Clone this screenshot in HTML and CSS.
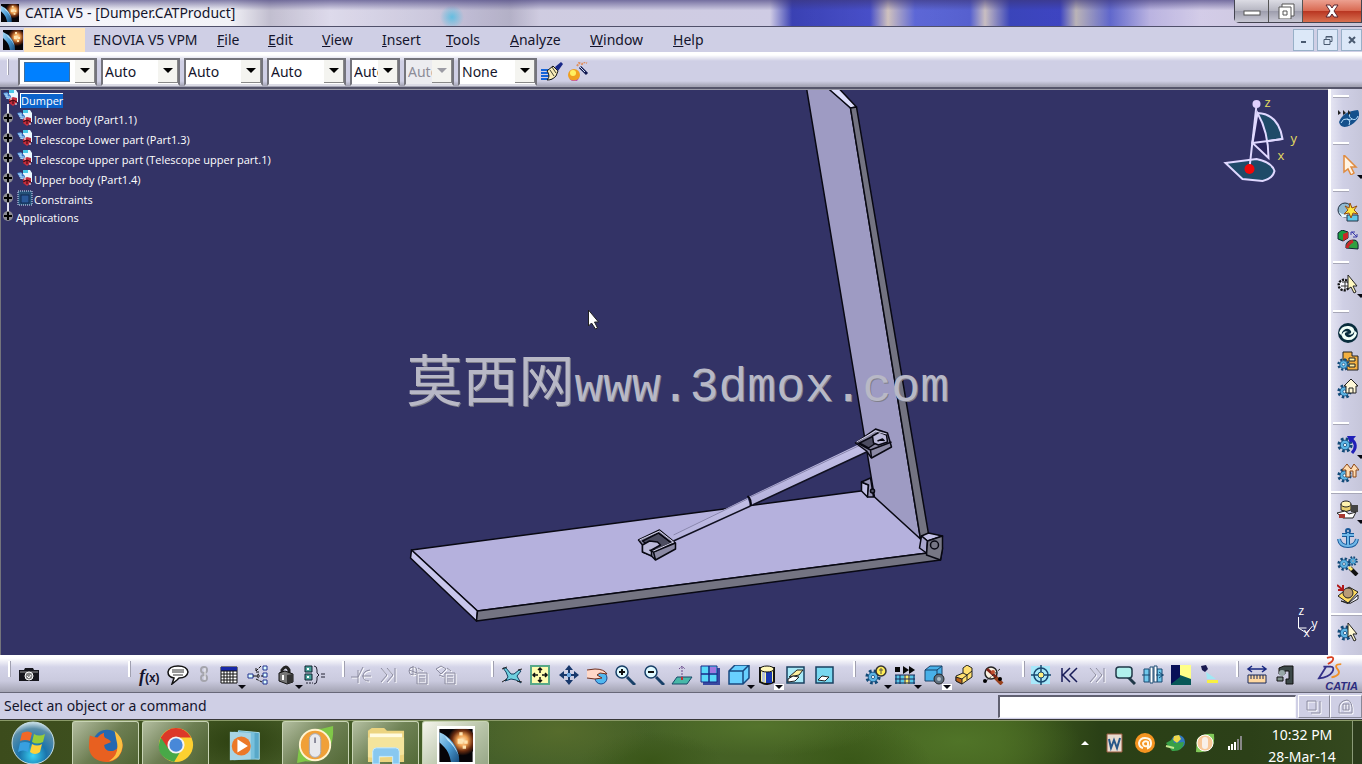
FILE: index.html
```html
<!DOCTYPE html>
<html lang="en">
<head>
<meta charset="utf-8">
<title>CATIA V5 - [Dumper.CATProduct]</title>
<link rel="stylesheet" href="styles.css">
</head>
<body>
<svg class="defs" aria-hidden="true">
  <defs>
    <radialGradient id="flare" cx="55%" cy="45%" r="50%"><stop offset="0" stop-color="#fff0c8"/><stop offset=".35" stop-color="#f0a050"/><stop offset=".7" stop-color="#6a2c10"/><stop offset="1" stop-color="#060408"/></radialGradient>
    <linearGradient id="comet" x1="0" y1="0" x2="1" y2="1"><stop offset="0" stop-color="#a8d8f4"/><stop offset=".5" stop-color="#4c9cd4"/><stop offset="1" stop-color="#184c7c"/></linearGradient>
    <radialGradient id="orb" cx="50%" cy="80%" r="80%"><stop offset="0" stop-color="#3ad4f4"/><stop offset=".4" stop-color="#1a74ac"/><stop offset=".8" stop-color="#5a8ea8"/><stop offset="1" stop-color="#cfe4ec"/></radialGradient>
    <linearGradient id="rod" x1="0" y1="0" x2="1" y2="2"><stop offset="0" stop-color="#cfccf2"/><stop offset="1" stop-color="#8f8cbb"/></linearGradient>
    <symbol id="catia" viewBox="0 0 20 20"><rect width="20" height="20" fill="#060408"/><circle cx="13" cy="8" r="9" fill="url(#flare)"/><path d="M0 2Q5 4 8 8q4 5 4 12H7Q6 14 3 11L0 8Z" fill="url(#comet)"/><path d="M3 4q6 4 9 13-3-7-7-10z" fill="#c8e8f8"/><path d="M12 2h2v2h-2zM14 10h2v2h-2zM11 6h3v3h-3zM15 7h2v2h-2z" fill="#ffe4b0"/></symbol>
    <symbol id="gear" viewBox="0 0 20 20"><circle cx="10" cy="10" r="7" fill="none" stroke="#124a78" stroke-width="5" stroke-dasharray="3 2.5"/><circle cx="10" cy="10" r="6" fill="#5cb4e4" stroke="#124a78"/><circle cx="10" cy="10" r="2" fill="#fff" stroke="#124a78"/></symbol>
    <symbol id="part" viewBox="0 0 16 16"><path d="M6 0h7l2 3v9H6z" fill="#e8f8ff"/><path d="M6 0h5v3H6z" fill="#48c8e8"/><path d="M0 3l4-1 4 4-1 4-4-2z" fill="#3c78c8"/><path d="M1 4h2v3M4 3v4h3M3 8l4 1" stroke="#b8e4ff" fill="none"/><path d="M6 9l4-2 4 1v5l-4 3-4-3z" fill="#c42c3c"/><path d="M6 12l4-2 4 2M10 10v4" stroke="#300810" fill="none"/><path d="M7 9h2M12 14h2" stroke="#fff"/></symbol>
    <symbol id="knot" viewBox="0 0 10 10"><circle cx="5" cy="5" r="5" fill="#8c8c94"/><path d="M5 1v8M1 5h8" stroke="#000" stroke-width="2"/></symbol>
  </defs>
</svg>

<header class="titlebar">
  <svg class="app-icon" viewBox="0 0 20 20"><use href="#catia"/></svg>
  <h1 class="title">CATIA V5 - [Dumper.CATProduct]</h1>
  <div class="window-buttons">
    <button class="wb" aria-label="Minimize"><svg viewBox="0 0 20 16"><rect x="2" y="8" width="16" height="4" fill="#fff" stroke="#555"/></svg></button>
    <button class="wb" aria-label="Restore"><svg viewBox="0 0 20 16"><path d="M6 1h12v12h-3v3H3V4h3z" fill="#fff" stroke="#555"/><path d="M6 4h9v9M7 8h4v4H7z" fill="none" stroke="#555"/></svg></button>
    <button class="wb wb-close" aria-label="Close"><svg viewBox="0 0 20 16"><path d="M4 2h4l2 3 2-3h4l-4 6 4 6h-4l-2-3-2 3H4l4-6z" fill="#fff" stroke="#5a2630"/></svg></button>
  </div>
</header>

<nav class="menubar">
  <svg class="menu-icon" viewBox="0 0 20 20"><use href="#catia"/></svg>
  <button class="menu menu-start"><u>S</u>tart</button>
  <button class="menu menu-enovia">ENOVIA V5 VPM</button>
  <button class="menu menu-file"><u>F</u>ile</button>
  <button class="menu menu-edit"><u>E</u>dit</button>
  <button class="menu menu-view"><u>V</u>iew</button>
  <button class="menu menu-insert"><u>I</u>nsert</button>
  <button class="menu menu-tools"><u>T</u>ools</button>
  <button class="menu menu-analyze"><u>A</u>nalyze</button>
  <button class="menu menu-window"><u>W</u>indow</button>
  <button class="menu"><u>H</u>elp</button>
  <div class="mdi">
    <button aria-label="Minimize document"><svg viewBox="0 0 12 12"><path d="M3 8h5" stroke="#4a5a70" stroke-width="2"/></svg></button>
    <button aria-label="Restore document"><svg viewBox="0 0 12 12"><path d="M2 5.500h6v5H2zM4 5V2.500h6v5H8M4 3h6" fill="none" stroke="#4a5a70"/></svg></button>
    <button aria-label="Close document"><svg viewBox="0 0 12 12"><path d="M3 3l6 6M9 3L3 9" stroke="#4a5a70" stroke-width="2"/></svg></button>
  </div>
</nav>

<section class="properties" aria-label="Graphic properties">
  <i class="grip"></i>
  <span class="combo combo-color"><select aria-label="Fill color"><option label=" "></option></select><i class="swatch"></i><i class="arrow"></i></span>
  <span class="combo"><select aria-label="Transparency"><option>Auto</option></select><i class="arrow"></i></span>
  <span class="combo"><select aria-label="Line thickness"><option>Auto</option></select><i class="arrow"></i></span>
  <span class="combo"><select aria-label="Line type"><option>Auto</option></select><i class="arrow"></i></span>
  <span class="combo combo-small"><select aria-label="Point symbol"><option>Auto</option></select><i class="arrow"></i></span>
  <span class="combo combo-small combo-off"><select aria-label="Rendering style" disabled><option>Auto</option></select><i class="arrow"></i></span>
  <span class="combo"><select aria-label="Layer"><option>None</option></select><i class="arrow"></i></span>
  <button class="tool" aria-label="Painter"><svg viewBox="0 0 22 20"><path d="M0 8h8M0 11h9M0 14h9M0 17h11" stroke="#1464d8" stroke-width="2"/><path d="M6 9l6-5 5 5-2 5c-3 3-5 4-9 4 2-2 3-5 0-9z" fill="#f8ecb8" stroke="#111"/><path d="M9 8l4 6M11 5l4 6" stroke="#443"/><path d="M14 5l6-5 2 2-5 7z" fill="#182888"/></svg></button>
  <button class="tool" aria-label="Wizard"><svg viewBox="0 0 22 20"><circle cx="7" cy="13" r="6" fill="#f0a020"/><circle cx="6" cy="11" r="3" fill="#fff060"/><path d="M2 16q5 5 10 0l-2 3H5z" fill="#c050b0"/><path d="M13 5l7 7" stroke="#101850" stroke-width="3"/><path d="M13 5l5 5" stroke="#d0e0f0"/><path d="M10 4l2-3 3 1 2-2 3 1" stroke="#e09060" stroke-width="2" fill="none" stroke-dasharray="2 1"/></svg></button>
</section>

<main class="workspace">
  <section class="viewport" aria-label="3D view">
    <svg class="scene" viewBox="0 90 1328 565" preserveAspectRatio="xMidYMid slice">
      <g stroke="#080812" stroke-width="1.500" stroke-linejoin="round">
        <path d="M411 550L868 490L921 539L927 553L477 611Z" fill="#b5b1dd"/>
        <path d="M411 550L410 558L476 621L477 611Z" fill="#c8c6ec"/>
        <path d="M477 611L927 553L942 548L940 560L476 621Z" fill="#747482"/>
        <path d="M806 88L829 88L850 108L920 539L874 497Z" fill="#9e9bc3"/>
        <path d="M826 87L850 108L856 107L837 87Z" fill="#dcdcfa"/>
        <path d="M850 108L856 107L928 534L920 539Z" fill="#737381"/>
        <path d="M921 536L928 533L942 536L927 541Z" fill="#c3c1e6"/>
        <path d="M921 536L927 541L926 553L919 548Z" fill="#aaa8ce"/>
        <path d="M927 541L942 536V549L940 560L926 555Z" fill="#777785"/><circle cx="934" cy="545" r="4" fill="#777785"/>
        <path d="M861 482L868 485L867 497L861 491Z" fill="#c3c1e6"/>
        <path d="M861 482L870 478L873 497L867 497L868 485Z" fill="#9996b8"/><circle cx="872" cy="491" r="2" fill="#55556a"/>
      </g>
      <path d="M672 535L747 498L750 506L673 541Z" fill="url(#rod)"/>
      <path d="M748 497L859 444L866 452L752 505Z" fill="url(#rod)"/>
      <path d="M673 535L747 499M750 497L860 445" stroke="#8885ac"/>
      <path d="M673 541L750 506M752 505L866 452" stroke="#101020" stroke-width="1.500"/>
      <path d="M747 496q4 3 3 10" fill="none" stroke="#080812" stroke-width="2"/>
      <g stroke="#080812" stroke-width="1.500" stroke-linejoin="round">
        <path d="M638 540L659 530L675 543V549L655 560L650 555L642 552V545Z" fill="#8b89a4"/>
        <path d="M642 541L658 533L671 543L655 551Z" fill="#4c4c60"/>
        <path d="M642 545l7-4 8 1 3 3-9 5v6l-9-4z" fill="#bcbada"/><path d="M653 552L675 543M655 560L653 552M649 550L653 552L671 543L658 533" fill="none"/>
        <path d="M639 540L659 531L673 542L653 551" fill="none" stroke="#d8d6ee" stroke-width="1"/>
        <path d="M855 443L875 429L887 433L891 447L871 458L866 451Z" fill="#8b89a4"/>
        <path d="M859 443L875 435L883 438L868 448Z" fill="#4c4c60"/>
        <path d="M872 436l7-4 7 3 1 7-9 3-5-2z" fill="#bcbada"/><path d="M870 450L891 442M871 458L870 450L857 443" fill="none"/><path d="M877 441l5-2 2 2"/>
        <path d="M856 442L875 431L886 434" fill="none" stroke="#d8d6ee" stroke-width="1"/>
      </g>
      <g fill="#1f4a68" stroke="#e0d8ff" stroke-width="2">
        <path d="M1225 163L1256 159Q1271 162 1274 171Q1272 179 1262 181L1242 179Z"/>
        <path d="M1257 113Q1278 114 1282 139L1252 143Z"/><path d="M1257 113Q1268 132 1268 158L1252 143Z" fill="#29245c"/>
        <path d="M1252 143L1282 139M1256 105L1249 168" fill="none"/>
      </g>
      <circle cx="1256" cy="104" r="4" fill="#e0d0ff"/><circle cx="1249" cy="169" r="5" fill="#f00808"/>
      <g class="axis-labels"><text x="1264" y="107">z</text><text x="1290" y="143">y</text><text x="1277" y="160">x</text></g>
      <path d="M1298 617v11l8 5 6-7M1298 628h8" fill="none" stroke="#fff"/>
      <g class="axis-small"><text x="1298" y="615">z</text><text x="1311" y="628">y</text><text x="1303" y="637">x</text></g>
      <text class="mark" x="406" y="401">莫西网<tspan class="mark-latin">www.3dmox.com</tspan></text>
      <path d="M588 310v16l3-3 4 6 2-1-3-6h4z" fill="#fff" stroke="#222"/>
    </svg>
    <ul class="tree">
      <li class="root"><svg class="part"><use href="#part"/></svg><span class="selected">Dumper</span></li>
      <li><svg class="knot"><use href="#knot"/></svg><svg class="part"><use href="#part"/></svg>lower body (Part1.1)</li>
      <li><svg class="knot"><use href="#knot"/></svg><svg class="part"><use href="#part"/></svg>Telescope Lower part (Part1.3)</li>
      <li><svg class="knot"><use href="#knot"/></svg><svg class="part"><use href="#part"/></svg>Telescope upper part (Telescope upper part.1)</li>
      <li><svg class="knot"><use href="#knot"/></svg><svg class="part"><use href="#part"/></svg>Upper body (Part1.4)</li>
      <li><svg class="knot"><use href="#knot"/></svg><svg class="part" viewBox="0 0 16 16"><rect x="1" y="1" width="14" height="14" fill="#245078" stroke="#d8e8ff" stroke-dasharray="1 1"/><rect x="4" y="5" width="8" height="8" fill="#2a5898" stroke="#102850"/></svg>Constraints</li>
      <li><svg class="knot"><use href="#knot"/></svg>Applications</li>
    </ul>
  </section>
  <aside class="sidebar" aria-label="Assembly tools">
    <div class="side-group"><button class="tool" aria-label="DMU"><svg viewBox="0 0 22 20"><path d="M2 14Q6 3 21 2Q25 10 14 17Q4 22 2 14Z" fill="#14508c"/><path d="M4 15q2-5 6-4t2 6M13 4q-2 5 2 7t6-3M10 11q4 2 5 0" fill="none" stroke="#b8e0ff"/><path d="M1 2v5l3-2zM6 2v5l3-2zM11 2v5l3-2z" fill="#222"/></svg></button></div>
    <div class="side-group"><button class="tool" aria-label="Select"><svg viewBox="0 0 22 20"><path d="M7 0v17l4-3 3 6 3-2-3-6h5z" fill="#fff4e4" stroke="#e08c40" stroke-width="1.500"/></svg><i class="drop"></i></button></div>
    <div class="side-group"><button class="tool" aria-label="New component"><svg viewBox="0 0 22 20"><circle cx="8" cy="8" r="7" fill="#90b8d0" stroke="#234"/><path d="M2 10q6 5 12 0l-3 5H5z" fill="#e8f8ff"/><path d="M10 13h11v6H10z" fill="#60c8e8" stroke="#234"/><path d="M13 1l2 5 5-2-3 4 4 4-5-1-2 5-2-5-5 1 4-4-3-4 4 2z" fill="#ffe840" stroke="#964c10"/></svg></button>
      <button class="tool" aria-label="Replace component"><svg viewBox="0 0 22 20"><path d="M1 3l4-3 6 2v6l-5 3-5-2z" fill="#18a040" stroke="#123"/><path d="M6 4l5-2v6l-5 3z" fill="#c82828"/><path d="M14 2h4M14 2v3M20 7h-4M20 7V4M15 2l5 5" stroke="#3838a8" fill="none"/><path d="M9 18Q8 10 17 10q5 0 4 9z" fill="#30a040" stroke="#123"/><path d="M16 11q-5 2-6 7" stroke="#c82828" stroke-width="3"/></svg></button></div>
    <div class="side-group"><button class="tool" aria-label="Product selection"><svg viewBox="0 0 22 20"><circle cx="7" cy="11" r="5" fill="#f8f8ff" stroke="#111" stroke-width="3" stroke-dasharray="2 1"/><circle cx="7" cy="11" r="4" fill="#f8f8ff"/><path d="M5 8h6M4 12h7M8 7v9" stroke="#333"/><path d="M11 1v14l3-2 3 6 2-1-3-6h4z" fill="#fff8c0" stroke="#222"/></svg><i class="drop"></i></button></div>
    <div class="side-group"><button class="tool" aria-label="Workbench"><svg viewBox="0 0 22 20"><circle cx="11" cy="10" r="10" fill="#082c3c"/><path d="M2 10Q4 2 12 3q6 1 5 6-2 4-6 2 4 0 3-3-3-4-7-1-3 2-2 6zM20 10q-2 8-10 7-6-1-5-6 2-4 6-2-4 0-3 3 3 4 7 1 3-2 2-6z" fill="#f0fff8"/></svg></button>
      <button class="tool" aria-label="Graph tree"><svg viewBox="0 0 22 20"><path d="M6 1h9v4h6v14H10V9H6z" fill="#f4b040" stroke="#222"/><path d="M12 7h6v3h-6zM12 13h6v3h-6z" fill="#fff0a0" stroke="#222"/><svg x="0" y="7" width="13" height="13"><use href="#gear"/></svg></svg></button>
      <button class="tool" aria-label="Home product"><svg viewBox="0 0 22 20"><svg x="0" y="5" width="15" height="15"><use href="#gear"/></svg><path d="M7 7l7-7 7 7h-2v7H9V7z" fill="#fff8d8" stroke="#222"/><path d="M12 14V9h4v5" fill="none" stroke="#222"/></svg></button></div>
    <div class="side-group"><button class="tool" aria-label="Manipulation"><svg viewBox="0 0 22 20"><svg x="0" y="2" width="16" height="16"><use href="#gear"/></svg><path d="M14 4q8 6 1 14" fill="none" stroke="#2020b8" stroke-width="3"/><path d="M10 1h9l-6 7z" fill="#2020b8"/></svg><i class="drop"></i></button>
      <button class="tool" aria-label="Snap"><svg viewBox="0 0 22 20"><svg x="0" y="5" width="15" height="15"><use href="#gear"/></svg><path d="M9 14V7H5l5-6 4 5 3-5 5 6h-3v7h-3V8h-3v6z" fill="#ffdcb0" stroke="#8c4818"/></svg></button></div>
    <div class="side-group side-plain"><button class="tool" aria-label="Coincidence"><svg viewBox="0 0 22 20"><path d="M4 4v6q5 3 10 0V4" fill="#e8d070" stroke="#222"/><ellipse cx="9" cy="4" rx="5" ry="3" fill="#fff4b0" stroke="#222"/><path d="M14 5h7v7h-7z" fill="#444"/><path d="M0 13l8-2 4 3 7-2-3 6H6z" fill="#fff" stroke="#222"/><path d="M2 14h6v4H2z" fill="#a83830"/></svg><i class="drop"></i></button>
      <button class="tool" aria-label="Fix component"><svg viewBox="0 0 22 20"><g fill="none" stroke="#185898" stroke-width="4"><circle cx="11" cy="3" r="1"/><path d="M11 5v13M5 7h12M2 11q1 7 9 7t9-7"/></g><path d="M11 5v13M5 7h12M2 11q1 7 9 7t9-7" fill="none" stroke="#70b8e8" stroke-width="2"/></svg></button>
      <button class="tool" aria-label="Quick constraint"><svg viewBox="0 0 22 20"><svg x="0" y="1" width="14" height="14"><use href="#gear"/></svg><svg x="11" y="0" width="10" height="10"><use href="#gear"/></svg><path d="M13 12l7 7" stroke="#111" stroke-width="4"/><path d="M12 11l3 3" stroke="#ffe870" stroke-width="3"/></svg></button>
      <button class="tool" aria-label="Flexible assembly"><svg viewBox="0 0 22 20"><path d="M1 12L12 3l9 5-10 11z" fill="#ffdc60" stroke="#222"/><path d="M4 17l8 2 9-8v4l-9 5z" fill="#f8f8ff" stroke="#222"/><circle cx="11" cy="9" r="5" fill="#b89c78" stroke="#222"/><path d="M0 1l6 5M6 1v5H1" stroke="#b01818" stroke-width="2" fill="none"/></svg></button></div>
    <div class="side-group side-plain side-last"><button class="tool" aria-label="Select constraint"><svg viewBox="0 0 22 20"><svg x="0" y="3" width="16" height="16"><use href="#gear"/></svg><path d="M11 1v14l3-2 3 6 2-1-3-6h4z" fill="#fff8d0" stroke="#222"/></svg></button></div>
  </aside>
</main>

<section class="toolbar" aria-label="Tools">
  <div class="group g1"><button class="tool" aria-label="Capture"><svg viewBox="0 0 22 20"><path d="M1 5h5l1-2h8l1 2h5v11H1z" fill="#16161c"/><path d="M2 7h18" stroke="#999"/><circle cx="11" cy="11" r="4" fill="#888" stroke="#fff"/><path d="M9 11l2 2 2-3" stroke="#fff" fill="none"/></svg></button></div>
  <div class="group g2">
    <button class="tool tool-fx" aria-label="Formula"><i>f</i>(x)</button>
    <button class="tool" aria-label="Comment"><svg viewBox="0 0 22 20"><path d="M11 1q9 0 10 6-1 6-9 6l-2 2-5 4 2-6Q1 12 1 7q1-6 10-6z" fill="#fff" stroke="#111" stroke-width="1.500"/><path d="M5 5h12M5 7h12M6 10h10" stroke="#333"/></svg></button>
    <button class="tool tool-narrow" aria-label="Link"><svg viewBox="0 0 22 20"><g fill="none" stroke="#a4a4ac" stroke-width="2"><circle cx="11" cy="5" r="3"/><circle cx="11" cy="13" r="3"/></g><path d="M12 3v12" stroke="#eee"/></svg></button>
    <button class="tool" aria-label="Design table"><svg viewBox="0 0 22 20"><path d="M3 2h16v16H3z" fill="#fff" stroke="#111"/><path d="M3 2h16v4H3z" fill="#1828a8"/><path d="M3 6h16M3 9h16M3 12h16M3 15h16M6 6v12M9 6v12M12 6v12M15 6v12" stroke="#111"/></svg><i class="drop"></i></button>
    <button class="tool" aria-label="Relations"><svg viewBox="0 0 22 20"><path d="M1 9h5v4H1zM16 1h4v4h-4zM16 8h4v4h-4zM16 15h4v4h-4z" fill="#dff" stroke="#203090"/><path d="M6 11h10M9 6l5-5M9 14l6 3M9 3v4h3M12 9l-3 2 3 2" fill="none" stroke="#111" stroke-dasharray="3 1"/></svg></button>
    <button class="tool" aria-label="Lock"><svg viewBox="0 0 22 20"><path d="M7 9V5q4-6 7 0v4" fill="none" stroke="#222" stroke-width="3"/><path d="M4 8l6-2 8 3v8l-6 2-8-3z" fill="#777" stroke="#111"/><path d="M12 10l6-1v8l-6 2z" fill="#333"/><path d="M8 10v5" stroke="#fff" stroke-width="2"/></svg><i class="drop"></i></button>
    <button class="tool" aria-label="Equivalent dimensions"><svg viewBox="0 0 22 20"><path d="M1 1h7v6H1zM1 9h7v6H1z" fill="#48a098" stroke="#123"/><path d="M3 3h2v2H3zM3 11h2v2H3z" fill="#fff"/><path d="M2 18h7" stroke="#223" stroke-dasharray="2 1"/><path d="M10 1q3 0 3 4v3l2 2-2 2v3q0 4-3 4M17 9h4M17 12h4" fill="none" stroke="#223"/></svg></button>
  </div>
  <div class="group g3">
    <button class="tool" aria-label="Break link"><svg class="off" viewBox="0 0 22 20"><path d="M1 12h7L13 2M8 5v13M12 11h9M20 5q-7 1-7 6 0 5 6 5"/></svg></button>
    <button class="tool" aria-label="Step forward"><svg class="off" viewBox="0 0 22 20"><path d="M3 3l6 7-6 7M9 3l6 7-6 7M17 3v14"/></svg></button>
    <button class="tool" aria-label="Paste component"><svg class="off" viewBox="0 0 22 20"><circle cx="6" cy="6" r="4"/><path d="M2 5l8 3M6 1v9M11 3l5 3M10 8h10v11H10zM12 11h6M12 14h6M12 16h6"/></svg></button>
    <button class="tool" aria-label="Update component"><svg class="off" viewBox="0 0 22 20"><path d="M1 4l5 5 5-5-5-3zM4 10l5 2M10 8h10v11H10zM12 11h6M12 14h6M12 16h6M12 3l4 3"/></svg></button>
  </div>
  <div class="group g4">
    <button class="tool" aria-label="Fly mode"><svg viewBox="0 0 22 20"><path d="M2 3l3 0 5 6 3 0 5-4 2 1-4 5 1 2 3 5-5-3-5-1-6 2 3-4-2-5z" fill="#70d0e0" stroke="#124060"/><path d="M1 4l5-2M17 5l4-1M1 17l5-3M16 16l5 1" stroke="#222"/></svg></button>
    <button class="tool" aria-label="Fit all in"><svg viewBox="0 0 22 20"><path d="M2 1h18v18H2z" fill="#fffcb0" stroke="#58a888" stroke-width="2"/><path d="M11 3v5M11 12v5M4 10h5M13 10h5M9 5l2-2 2 2M9 15l2 2 2-2M6 8l-2 2 2 2M16 8l2 2-2 2" fill="none" stroke="#111" stroke-width="1.500"/></svg></button>
    <button class="tool" aria-label="Pan"><svg viewBox="0 0 22 20"><path d="M11 2v16M3 10h16" stroke="#18386c" stroke-width="2"/><path d="M11 0l4 5H7zM11 20l4-5H7zM1 10l5-4v8zM21 10l-5-4v8z" fill="#18386c"/><path d="M9 8h4v4H9z" fill="#70a8e0"/></svg></button>
    <button class="tool" aria-label="Rotate"><svg viewBox="0 0 22 20"><circle cx="15" cy="13" r="6" fill="#50b8f0" stroke="#184890"/><path d="M1 5l8-1q9 0 12 5l-7-1-3 2 5 3-7 1-8-1" fill="#ffd8c8" stroke="#703020"/></svg></button>
    <button class="tool" aria-label="Zoom in"><svg viewBox="0 0 22 20"><path d="M13 12l8 8" stroke="#184068" stroke-width="3"/><circle cx="8" cy="7" r="6" fill="#e0faff" stroke="#184068" stroke-width="1.500"/><path d="M5 7h6M8 4v6" stroke="#111" stroke-width="2"/></svg></button>
    <button class="tool" aria-label="Zoom out"><svg viewBox="0 0 22 20"><path d="M13 12l8 8" stroke="#184068" stroke-width="3"/><circle cx="8" cy="7" r="6" fill="#e0faff" stroke="#184068" stroke-width="1.500"/><path d="M5 7h6" stroke="#111" stroke-width="2"/></svg></button>
    <button class="tool" aria-label="Normal view"><svg viewBox="0 0 22 20"><path d="M6 12h15l-5 7H1z" fill="#48b8a8" stroke="#184868"/><path d="M11 13V1M8 4l3-3 3 3" fill="none" stroke="#684888" stroke-dasharray="2 1"/><path d="M11 12v3" stroke="#c03030" stroke-width="2"/></svg></button>
    <button class="tool" aria-label="Multi view"><svg viewBox="0 0 22 20"><path d="M4 3h17v17H4z" fill="#3848a0"/><path d="M2 1h16v16H2z" fill="#58d8f8" stroke="#182888"/><path d="M11 2h6v6h-6z" fill="#a078e0"/><path d="M10 1v16M2 9h16" stroke="#182888" stroke-width="1.500"/></svg></button>
    <button class="tool" aria-label="Isometric view"><svg viewBox="0 0 22 20"><path d="M1 6l6-6h14v13l-6 6H1zM1 6h14v13M15 6l6-6" fill="#68d0ff" stroke="#184880" stroke-width="1.500"/></svg><i class="drop"></i></button>
    <button class="tool" aria-label="Shading"><svg viewBox="0 0 22 20"><path d="M4 3h14v14q-7 4-14 0z" fill="#f8f4a0" stroke="#111" stroke-width="2"/><path d="M10 7h6v11h-6z" fill="#1838b0"/><path d="M6 7h3v10H6z" fill="#b8c4e0"/><ellipse cx="11" cy="4" rx="7" ry="3" fill="#fff8b8" stroke="#111"/></svg><i class="drop drop-lit"></i></button>
    <button class="tool" aria-label="Hide/Show"><svg viewBox="0 0 22 20"><path d="M3 2h17v16H3z" fill="#a8eaf8" stroke="#184060" stroke-width="1.500"/><path d="M5 12l8-7h6l-4 5z" fill="#fff0a0" stroke="#222"/><path d="M4 14l5-3 6 1-4 4-7 1z" fill="#fff" stroke="#222"/></svg></button>
    <button class="tool" aria-label="Swap visible space"><svg viewBox="0 0 22 20"><path d="M3 2h17v16H3z" fill="#78d8f0" stroke="#184060" stroke-width="1.500"/><path d="M5 15l4-4 7 1-4 4z" fill="#fff" stroke="#222"/></svg></button>
  </div>
  <div class="group g5">
    <button class="tool" aria-label="Update all"><svg viewBox="0 0 22 20"><svg x="0" y="4" width="16" height="16"><use href="#gear"/></svg><circle cx="16" cy="6" r="5" fill="#ffec58" stroke="#333" stroke-width="1.500"/><path d="M14 5h4M16 3v6" stroke="#554"/></svg><i class="drop"></i></button>
    <button class="tool" aria-label="Simulation"><svg viewBox="0 0 22 20"><path d="M1 2h5v5H1zM9 1l6 4-6 4zM15 1l6 4-6 4z" fill="#080808"/><path d="M1 10h20v9H1z" fill="#58c8e8"/><path d="M10 10h6v9h-6z" fill="#fff070"/><path d="M1 10h20M1 14h20M1 18h20M2 10v9M6 10v9M11 10v9M15 10v9M20 10v9" stroke="#182858"/></svg><i class="drop"></i></button>
    <button class="tool" aria-label="Catalog part"><svg viewBox="0 0 22 20"><path d="M1 5l5-4h12v9l-5 6H1z" fill="#48b0e8" stroke="#184068"/><path d="M1 5h12v11M13 5l5-4" fill="none" stroke="#184068"/><circle cx="15" cy="14" r="5" fill="#607080" stroke="#222"/><circle cx="15" cy="14" r="2" fill="#b0c0c8"/></svg><i class="drop drop-lit"></i></button>
    <button class="tool" aria-label="Weld"><svg viewBox="0 0 22 20"><path d="M3 11l7-3V3l4-3 5 3v9L9 19l-6-3z" fill="#ffe070" stroke="#222"/><path d="M10 8l4 2 5-4M14 10v5M9 14l5-4" stroke="#222" fill="none"/><path d="M3 12l6 2v5l-6-3z" fill="#b86018" stroke="#222"/></svg></button>
    <button class="tool" aria-label="Clash analysis"><svg viewBox="0 0 22 20"><path d="M13 12l7 7" stroke="#98401c" stroke-width="4"/><circle cx="9" cy="8" r="6" fill="#f8f0e0" stroke="#222" stroke-width="1.500"/><path d="M5 4l9 8" stroke="#852418" stroke-width="3"/><path d="M18 4L3 17" stroke="#333" stroke-dasharray="3 1"/><circle cx="3" cy="16" r="2"/><circle cx="18" cy="14" r="2"/><circle cx="11" cy="7" r="2" fill="#c05030"/></svg></button>
  </div>
  <div class="group g6">
    <button class="tool" aria-label="Center graph"><svg viewBox="0 0 22 20"><rect x="1" y="1" width="19" height="18" fill="#a8e8fa"/><circle cx="11" cy="10" r="7" fill="none" stroke="#184870" stroke-width="1.500"/><circle cx="11" cy="10" r="3" fill="#fff080" stroke="#184870"/><path d="M11 0v7M11 13v7M1 10h7M14 10h7" stroke="#184870" stroke-width="1.500"/></svg></button>
    <button class="tool" aria-label="First"><svg viewBox="0 0 22 20"><path d="M4 3v14M12 3l-7 7 7 7M19 3l-7 7 7 7" fill="none" stroke="#181c58" stroke-width="1.500"/></svg></button>
    <button class="tool" aria-label="Last"><svg class="off" viewBox="0 0 22 20"><path d="M4 3l6 7-6 7M10 3l6 7-6 7M18 3v14"/></svg></button>
    <button class="tool" aria-label="Magnifier"><svg viewBox="0 0 22 20"><path d="M14 12l7 7" stroke="#203848" stroke-width="3"/><rect x="2" y="2" width="16" height="11" rx="3" fill="#b0f0ec" stroke="#203848" stroke-width="1.500"/></svg></button>
    <button class="tool" aria-label="Sectioning"><svg viewBox="0 0 22 20"><path d="M2 4h5v13H2zM15 4h5v13h-5z" fill="#70c8ec" stroke="#184870"/><path d="M8 2h3v16H8zM12 1h3v16h-3z" fill="#fff" stroke="#184870"/><path d="M0 10h8M14 10h8M17 7l4 3-4 3" fill="none" stroke="#184870"/></svg></button>
    <button class="tool" aria-label="Apply material"><svg viewBox="0 0 22 20"><path d="M1 0h20v20H1z" fill="#085858"/><path d="M1 0h9v12L1 19z" fill="#081058"/><path d="M10 0h11v14l-11-4z" fill="#ffff88"/></svg></button>
    <button class="tool" aria-label="Light"><svg viewBox="0 0 22 20"><path d="M3 1l5-1 2 4-3 3-3-2z" fill="#181850"/><path d="M8 7l10 7H9z" fill="#a0e8f4"/><path d="M9 15h11v3H9z" fill="#f8f040"/></svg></button>
  </div>
  <div class="group g7">
    <button class="tool" aria-label="Measure between"><svg viewBox="0 0 22 20"><path d="M2 4h18M6 1L2 4l4 3M16 1l4 3-4 3" fill="none" stroke="#182880" stroke-width="1.500"/><path d="M2 10h18v8H2z" fill="#ffd8a0" stroke="#182858"/><path d="M5 10v4M8 10v4M11 10v4M14 10v4M17 10v4" stroke="#182858"/></svg></button>
    <button class="tool" aria-label="Measure item"><svg viewBox="0 0 22 20"><path d="M5 3l5-2h9v18h-7v-5h3V6h-4v3H5z" fill="#3c4848" stroke="#111"/><circle cx="8" cy="8" r="3" fill="#98a8a8"/><path d="M3 12h6v4H3z" fill="#80908c" stroke="#111"/></svg></button>
  </div>
  <div class="brand"><svg viewBox="0 0 40 28"><path d="M11 2q7-2 7 1 0 3-6 6" fill="none" stroke="#d84020" stroke-width="2"/><path d="M7 12h8q5 0 2 6-4 6-15 7l8-13" fill="none" stroke="#343088" stroke-width="2"/><path d="M27 9q-9 0-4 6t-7 9" fill="none" stroke="#f09028" stroke-width="2"/></svg><span>CATIA</span></div>
</section>

<footer class="status">
  <label for="cmd">Select an object or a command</label>
  <input id="cmd" type="text">
  <button aria-label="Dialog"><svg class="off" viewBox="0 0 22 20"><path d="M4 5h9v9H4zM17 5v12H8"/></svg></button>
  <button aria-label="Knowledge"><svg class="off" viewBox="0 0 22 20"><path d="M4 14q-1-9 8-10 6 1 5 13H4zM8 8h6v6H8zM11 8v6"/></svg></button>
</footer>

<nav class="taskbar" aria-label="Taskbar">
  <button class="orb" aria-label="Start menu"><svg viewBox="0 0 44 44"><circle cx="22" cy="22" r="21" fill="url(#orb)" stroke="#c8e0e8"/><path d="M11 12q6-3 10 0l-2 8q-5-2-10 0z" fill="#f06828"/><path d="M23 13q5 3 11 0l-2 8q-6 3-11 0z" fill="#98cc38"/><path d="M9 22q5-2 10 0l-2 9q-5-3-10 0z" fill="#38a0e0"/><path d="M21 23q5 3 10 0l-2 8q-5 4-10 0z" fill="#fcd038"/></svg></button>
  <button class="task" aria-label="Firefox"><svg viewBox="0 0 40 40"><circle cx="21" cy="19" r="15" fill="#2468b0"/><path d="M3 10q5 2 8 2 3-4 7-5-1 4 2 6 5 2 5 4l-7 3q1 8 10 6 8-3 5-16 6 6 4 15-4 13-17 13Q4 37 2 23 2 15 3 10z" fill="#e86020"/><path d="M29 5q12 10 7 22-4 9-13 10 12-7 8-22z" fill="#fcc040"/></svg></button>
  <button class="task" aria-label="Chrome"><svg viewBox="0 0 40 40"><circle cx="20" cy="20" r="18" fill="#fcd030"/><path d="M4 12q-8 20 14 26l9-15-12-1z" fill="#48a848"/><path d="M4 12l8 12 8-12h16Q30 2 20 2T4 12z" fill="#dc3828"/><circle cx="20" cy="20" r="9" fill="#f4f4f4"/><circle cx="20" cy="20" r="7" fill="#4888d8"/></svg></button>
  <button class="task task-idle" aria-label="Media player"><svg viewBox="0 0 40 40"><path d="M12 5l22 2v28l-22-1z" fill="#58a8c8" stroke="#a8dcec"/><path d="M7 6l22 1v28l-22 1z" fill="#78c0dc"/><path d="M3 6l22 1v28l-22 1z" fill="#a8d4e4"/><circle cx="15" cy="21" r="10" fill="#ec7828"/><path d="M11 14l11 7-11 7z" fill="#fff"/></svg></button>
  <button class="task" aria-label="Mouse utility"><svg viewBox="0 0 40 40"><path d="M3 17Q10 2 26 3L38 0q1 18-6 27-8 12-23 10l-9 2q1-10 3-22z" fill="#80c848"/><circle cx="19" cy="20" r="16" fill="#f0a038" stroke="#fff4d0" stroke-width="2"/><rect x="13" y="8" width="12" height="25" rx="6" fill="#e8e8ec" stroke="#a8a8b0"/><path d="M19 12v6" stroke="#889" stroke-width="2"/></svg></button>
  <button class="task" aria-label="Explorer"><svg viewBox="0 0 40 40"><path d="M1 5l4-3h13l3 3h18v33H1z" fill="#ecd480"/><path d="M3 8h34v4H3z" fill="#fffbe0"/><path d="M1 12h38v18q-19 5-38 3z" fill="#f4e49c"/><path d="M6 40V27q0-4 4-4h20q4 0 4 4v13h-7v-8H13v8z" fill="#88c8f0" stroke="#c8ecff"/></svg></button>
  <button class="task task-active" aria-label="CATIA"><svg viewBox="0 0 40 40"><rect width="40" height="40" fill="#fff"/><svg x="2" y="3" width="36" height="35"><use href="#catia"/></svg></svg></button>
  <div class="tray">
    <svg viewBox="0 0 20 20"><path d="M6 12l4-4 4 4z" fill="#fff"/></svg>
    <svg viewBox="0 0 20 20"><path d="M2 1h15v18H2z" fill="#e8dcd0" stroke="#9a5a40"/><path d="M4 6l2 9 3-8 3 8 3-10" fill="none" stroke="#285888" stroke-width="2"/></svg>
    <svg viewBox="0 0 20 20"><circle cx="10" cy="10" r="10" fill="#f49420"/><path d="M8 15q-4-1-4-5 1-5 6-5 6 0 6 5 0 4-3 5V9q-3-2-5 1 0 4 4 3" fill="none" stroke="#fff8e8" stroke-width="2"/></svg>
    <svg viewBox="0 0 20 20"><circle cx="13" cy="9" r="7" fill="#3078c0"/><path d="M9 3l5-1 2 4-4 4-4-3z" fill="#f0d848"/><path d="M1 10l7-4 1 4 10-1q-1 10-12 9z" fill="#38a048"/><path d="M1 13l8 2" stroke="#c4e890" stroke-width="2"/></svg>
    <svg viewBox="0 0 20 20"><path d="M2 6Q8 0 19 1q1 10-3 14-6 5-15 4z" fill="#80c858"/><circle cx="10" cy="10" r="8" fill="#f8c898" stroke="#fff"/><rect x="7" y="4" width="6" height="12" rx="3" fill="#f8f0e8"/></svg>
    <svg viewBox="0 0 20 20"><path d="M4 13v4M7 11v6M10 9v8" stroke="#fff" stroke-width="2"/><path d="M13 6v11M16 3v14" stroke="#888" stroke-width="2"/></svg>
  </div>
  <div class="clock"><time>10:32 PM</time><time>28-Mar-14</time></div>
  <button class="peek" aria-label="Show desktop"></button>
</nav>
</body>
</html>
```

FILE: styles.css
```css
* { box-sizing: border-box; }
body { margin: 0; height: 100vh; display: flex; flex-direction: column; overflow: hidden; background: #cfcfe5; color: #14142c; font: 14px/20px "Noto Sans", "Open Sans", sans-serif; }
button { border: 0; padding: 0; margin: 0; background: none; color: inherit; font: inherit; }
ul { list-style: none; margin: 0; padding: 0; }
svg { display: block; flex: none; }
.defs { position: absolute; width: 0; height: 0; }

.titlebar { height: 27px; flex: none; display: flex; align-items: center; padding-left: 1px; border-bottom: 1px solid #50506a;
  background: linear-gradient(#4a4480aa, #ffffff22 40%, #ffffff22), radial-gradient(circle at 452px 17px, #4cb4dc, transparent 12px), linear-gradient(90deg, #dcdcea 0, #f4f4fa 60px, #f0f0f6 230px, #b8b4c8 270px, #d8d4e8 330px, #c4c0d8 430px, #b4b0cc 470px, #a8a4be 510px, #c8c4dc 540px, #c8c4e0 770px, #1c24a8 792px, #2c34c0 870px, #c8b8b4 888px, #4450d0 915px, #3c48c8 970px, #c0b4b8 985px, #1c28b0 1010px, #2028b8 1060px, #b0a8ac 1076px, #4850c4 1110px, #b0a8dc 1150px, #ccc4e4 1200px, #c0bcd0); }
.app-icon { width: 18px; height: 18px; }
.title { margin: 0 0 0 6px; font-size: 14px; font-weight: 400; }
.window-buttons { margin-left: auto; align-self: flex-start; display: flex; height: 23px; border: 1px solid #444450; border-top: 0; border-radius: 0 0 0 5px; }
.wb { width: 34px; display: grid; place-items: center; background: linear-gradient(#dcdce4, #b4b4c0 50%, #9c9cac 50%, #c8c8d4); border-right: 1px solid #555; }
.wb svg { width: 20px; height: 16px; }
.wb-close { width: 58px; border: 0; background: linear-gradient(#eca090, #d86850 50%, #b83420 50%, #d87050); }

.menubar { height: 25px; flex: none; display: flex; align-items: center; padding-left: 2px; }
.menu-icon { width: 22px; height: 20px; }
.menu { height: 24px; text-align: left; }
.menu-start { width: 61px; padding-left: 10px; background: #ffe5b8; }
.menu-enovia { width: 132px; padding-left: 8px; white-space: nowrap; }
.menu-file { width: 51px; }
.menu-edit { width: 54px; }
.menu-view { width: 60px; }
.menu-insert { width: 64px; }
.menu-tools { width: 64px; }
.menu-analyze { width: 80px; }
.menu-window { width: 83px; }
.mdi { margin-left: auto; display: flex; gap: 3px; }
.mdi button { width: 21px; height: 22px; display: grid; place-items: center; background: #dce8f8; border: 1px solid #98b0c8; }
.mdi svg { width: 12px; height: 12px; }

.properties { height: 37px; flex: none; display: flex; align-items: center; gap: 4px; padding: 4px 0 0 7px; border-bottom: 2px solid #55556a; background: linear-gradient(#fff, #fff 3px, #cfcfe5 9px, #cfcfe5 29px, #a4a4b4 34px); }
.grip { width: 2px; height: 16px; margin: 0 5px 10px 0; border-right: 1px solid #a0a0b0; background: #fff; }
.combo { position: relative; width: 79px; height: 28px; border: 2px solid; border-color: #74747c #74747c #dcdce6 #74747c; background: #fff; }
.combo select { appearance: none; width: 100%; height: 24px; border: 0; padding: 0 20px 0 2px; margin: 0; background: none; font: inherit; color: #14142c; }
.combo .arrow { position: absolute; right: 0; top: 0; width: 20px; height: 23px; display: grid; place-items: center; background: #f4f4f0; border-right: 1px solid #888; border-bottom: 1px solid #888; pointer-events: none; }
.arrow::before { content: ""; border: 5px solid transparent; border-top-color: #000; border-bottom: 0; }
.swatch { position: absolute; left: 4px; top: 2px; width: 46px; height: 20px; background: #0080ff; border: 1px solid #4070a0; pointer-events: none; }
.combo-small { width: 50px; }
.combo-off { background: #ececf0; }
.combo-off select { color: #8c8c98; opacity: 1; }
.combo-off .arrow::before { border-top-color: #9c9ca4; }
.tool { position: relative; display: grid; place-items: center; min-width: 0; height: 28px; }
.tool > svg { width: 22px; height: 20px; }
.drop { position: absolute; right: -2px; bottom: 0; border: 4px solid transparent; border-top-color: #080810; border-bottom: 0; }
.drop-lit { border-left-color: #fff; border-right-color: #fff; outline: 1px solid #fff; }
.off path, .off circle { fill: none; stroke: #8c8ca0; filter: drop-shadow(1px 1px 0 #fff); }

.workspace { flex: 1; min-height: 0; display: flex; }
.viewport { position: relative; flex: 1; min-width: 0; background: #333366; border-left: 1px solid #74747c; border-top: 1px solid #9a9aa8; overflow: hidden; }
.scene { position: absolute; inset: 0; width: 100%; height: 100%; }
.axis-labels { fill: #e4dc60; font: 13px "Open Sans", sans-serif; }
.axis-small { fill: #fff; font: 12px "Open Sans", sans-serif; }
.mark { fill: #b8b8c6; font: 400 56px "Noto Sans CJK SC", sans-serif; text-shadow: 1px 1px 0 #80808c; }
.mark-latin { font: 48px "Liberation Mono", monospace; }
.tree { position: absolute; left: 1px; top: 0; height: 136px; display: flex; flex-direction: column; color: #fff; font: 11px/14px "Open Sans", "Noto Sans", sans-serif; }
.tree::before { content: ""; position: absolute; left: 5px; top: 14px; bottom: 12px; width: 2px; background: #e4e4f0; }
.tree li { position: relative; flex: 1; display: flex; align-items: center; white-space: nowrap; }
.tree .knot { width: 10px; height: 10px; margin: 0 3px 4px 1px; }
.tree .part { width: 16px; height: 16px; margin: 0 1px 4px; }
.selected { background: #0c64cc; border-left: 1px solid #fff; border-top: 1px solid #fff; }

.sidebar { flex: none; width: 34px; padding-top: 6px; border-left: 3px solid #fff; background: linear-gradient(90deg, #e4e4f2, #cfcfe5 12px, #c6c6da); }
.side-group { position: relative; padding: 9px 0 10px 3px; }
.side-group::before { content: ""; position: absolute; left: 2px; top: 0; width: 16px; height: 2px; background: #fff; border-bottom: 1px solid #a8a8b8; }
.sidebar .tool { width: 28px; }
.sidebar .drop { right: -3px; }
.side-group:nth-child(3) { padding-bottom: 7px; }
.side-group:nth-child(4) { padding-bottom: 12px; }
.side-group:nth-child(5) { padding-bottom: 19px; }
.side-group:nth-child(6) { padding-bottom: 4px; }
.side-plain { padding: 5px 0 5px 3px; }
.side-plain::before { left: 0; width: 31px; }
.side-last { padding-bottom: 0; }

.toolbar { flex: none; height: 38px; display: flex; align-items: flex-start; padding: 6px 4px 0 8px; border-bottom: 1px solid #686878; background: linear-gradient(#fff, #fff 3px, #d4d4e8 12px, #cacade 26px, #a4a4b4); }
.group { position: relative; display: flex; flex: none; }
.group::before { content: ""; position: absolute; left: 0; top: 0; width: 2px; height: 16px; background: #fff; border-right: 1px solid #a0a0b0; }
.group .tool { flex: 1; }
.group .tool-narrow { flex: 0 0 23px; }
.g1 { width: 120px; padding: 0 85px 0 7px; }
.g2 { width: 214px; padding: 0 13px 0 7px; }
.g3 { width: 149px; padding: 0 31px 0 5px; }
.g4 { width: 362px; padding: 0 15px 0 7px; }
.g5 { width: 169px; padding: 0 14px 0 8px; }
.g6 { width: 214px; padding: 0 13px 0 5px; }
.g7 { width: 70px; padding: 0 7px; }
.tool-fx { font: 700 12px/20px "Liberation Sans", sans-serif; display: block; padding-top: 3px; }
.tool-fx i { font: italic 700 18px/20px "Liberation Serif", serif; }
.brand { margin-left: auto; margin-top: -5px; width: 43px; color: #2c2c80; font: italic 700 11px/10px "Liberation Sans", sans-serif; text-align: right; }
.brand svg { width: 40px; height: 25px; }

.status { flex: none; height: 27px; display: flex; align-items: center; padding-left: 4px; border-bottom: 1px solid #383838; }
.status label { flex: 1; }
.status input { width: 298px; height: 23px; border: 1px solid #f4f4fa; border-top: 2px solid #606070; border-left: 2px solid #606070; background: #fff; margin-right: 2px; }
.status button { width: 32px; height: 23px; display: grid; place-items: center; border: 1px solid #fff; border-right-color: #888898; border-bottom-color: #888898; }
.status button svg { width: 22px; height: 20px; }

.taskbar { flex: none; height: 44px; display: flex; align-items: stretch; border-top: 1px solid #8a9a68; color: #fff;
  background: radial-gradient(60px 30px at 240px 20px, #2c4010, transparent), radial-gradient(90px 40px at 560px 10px, #566c2c, transparent), radial-gradient(70px 30px at 650px 40px, #3a5618, transparent), radial-gradient(120px 30px at 760px 5px, #54742c, transparent), radial-gradient(80px 40px at 850px 40px, #3a5818, transparent), radial-gradient(120px 50px at 960px 20px, #507428, transparent), linear-gradient(90deg, #3c4c1c, #46602a 500px, #44621e 1000px, #2a4016 1100px, #2c4018 1250px, #35491f); }
.orb { width: 72px; overflow: hidden; display: grid; place-items: start center; padding: 0 6px 0 0; }
.orb svg { width: 44px; height: 44px; }
.task { width: 67px; margin-right: 3px; display: grid; place-items: start center; padding-top: 3px; overflow: hidden; border: 1px solid #c8d4b4; border-bottom: 0; border-radius: 3px 3px 0 0; background: linear-gradient(135deg, #d0d8c0cc, #8c9c7499 50%, #6c805066); }
.task > svg { width: 38px; height: 40px; }
.task-idle { border-color: transparent; background: none; }
.task-active { background: linear-gradient(135deg, #f4f4ec, #b8c4a8 60%, #98a888); }
.tray { margin-left: auto; margin-right: 7px; display: flex; align-items: center; gap: 10px; }
.tray svg { width: 20px; height: 20px; }
.clock { width: 100px; padding-top: 3px; display: flex; flex-direction: column; text-align: center; line-height: 22px; }
.peek { width: 10px; border-left: 1px solid #8a9a78; background: #2c3c1c; }
```
